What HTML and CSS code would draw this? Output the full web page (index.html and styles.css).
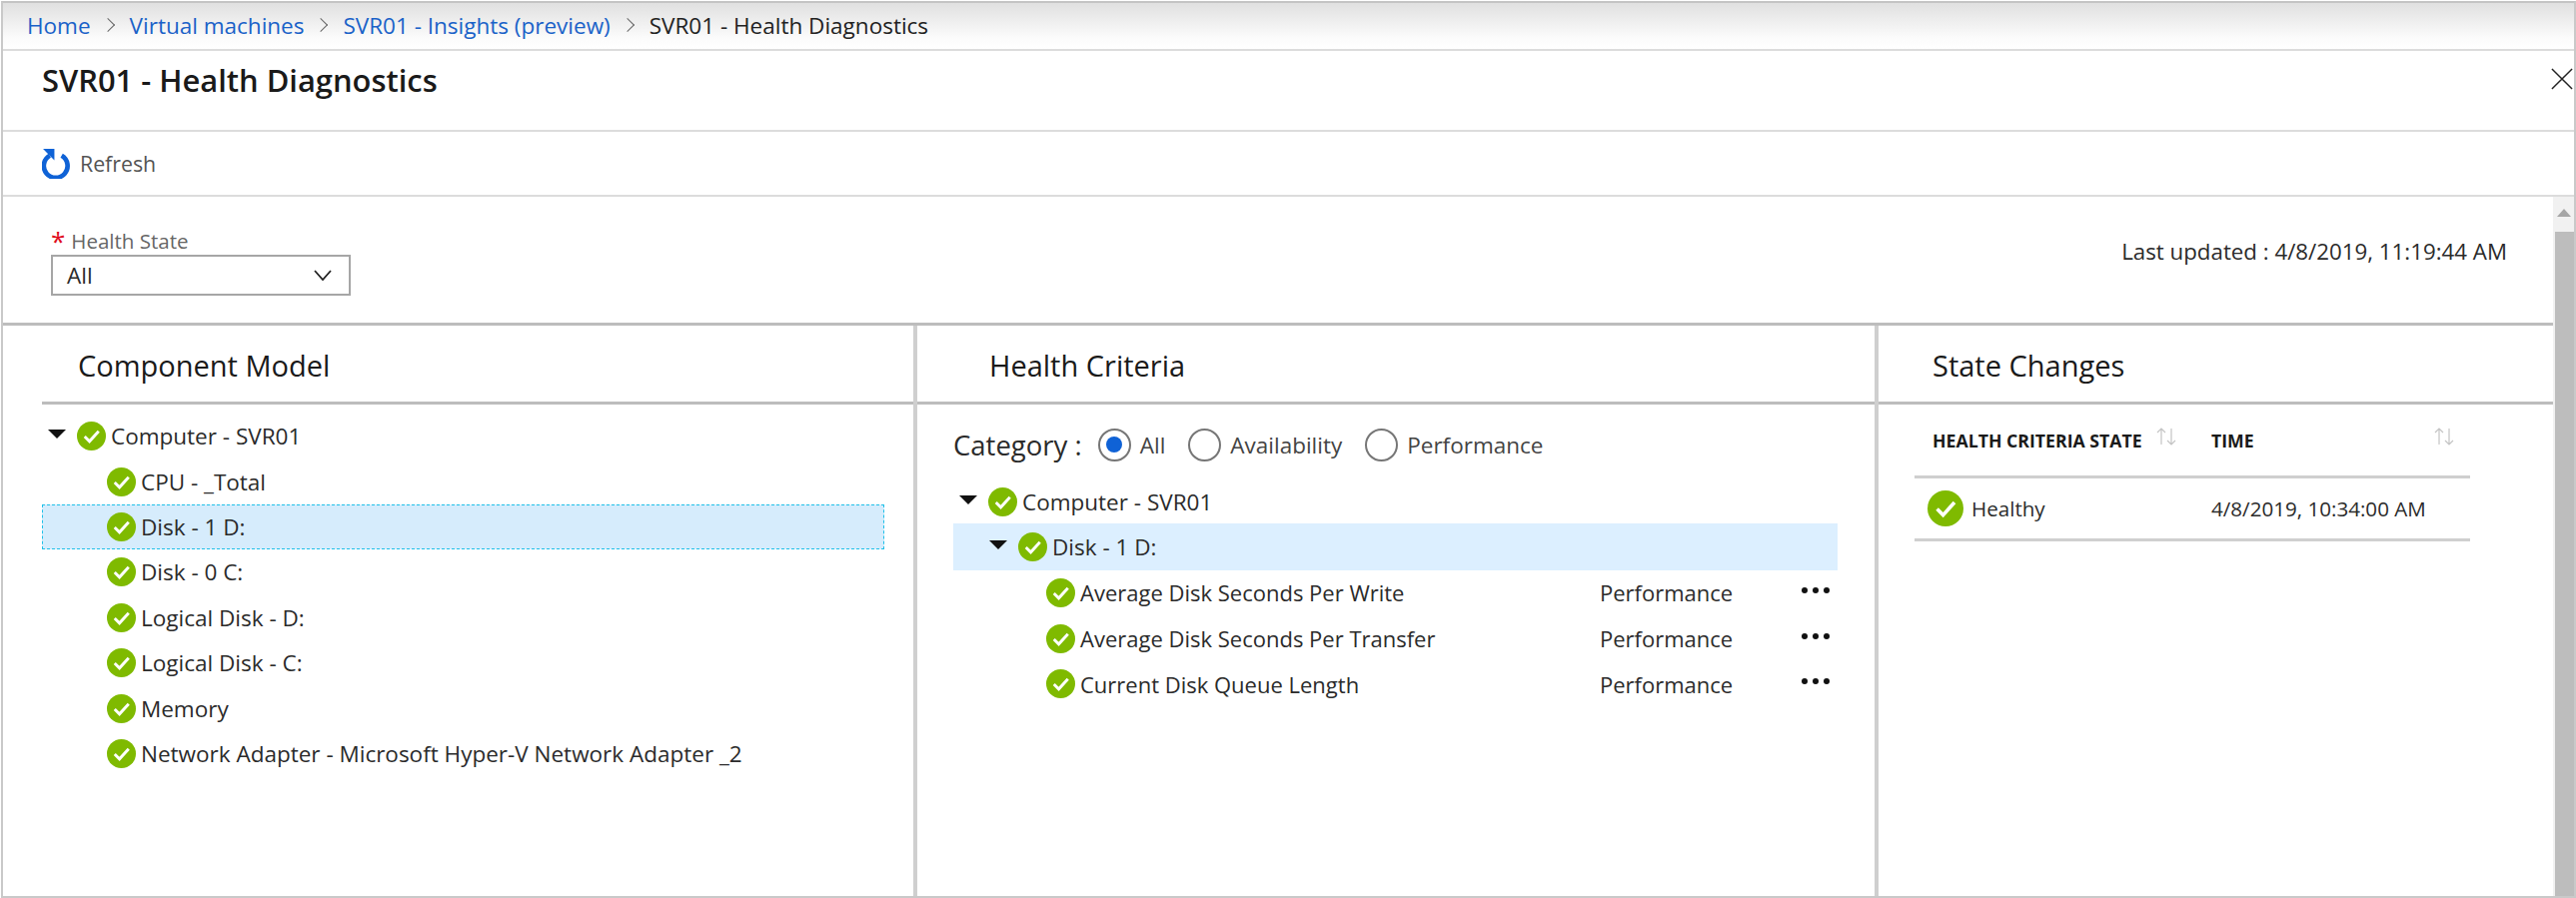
FILE: index.html
```html
<!DOCTYPE html>
<html>
<head>
  <title>SVR01 - Health Diagnostics</title>
  <link rel="stylesheet" href="styles.css">
</head>
<body>
  <svg class="defs" width="0" height="0">
    <symbol id="ok" viewBox="0 0 30 30">
      <circle cx="15" cy="15" r="15" fill="#7fba00"/>
      <path d="M8 15.5l5 5L22.5 10" fill="none" stroke="#fff" stroke-width="3"/>
    </symbol>
  </svg>
  <div class="window">
    <nav class="crumbs">
      <a>Home</a><span class="sep"></span>
      <a>Virtual machines</a><span class="sep"></span>
      <a>SVR01 - Insights (preview)</a><span class="sep"></span>
      <span>SVR01 - Health Diagnostics</span>
    </nav>
    <header class="title-bar">
      <h1>SVR01 - Health Diagnostics</h1>
      <svg class="close" viewBox="0 0 24 24"><path d="M1 1l22 22M23 1L1 23" stroke="#222" stroke-width="1.6" fill="none"/></svg>
    </header>
    <div class="toolbar">
      <svg class="refresh" viewBox="0 0 28 30"><path d="M19 7.5a11.5 11.5 0 1 1-11.5 0" fill="none" stroke="#0f62d6" stroke-width="4.5"/><path d="M1 1h11v11z" fill="#0f62d6"/></svg>
      <span>Refresh</span>
    </div>
    <div class="work">
      <div class="content">
        <div class="filter">
          <div>
            <div class="field-label"><span class="req">*</span>Health State</div>
            <div class="select">
              <span>All</span>
              <svg viewBox="0 0 18 11"><path d="M1 1l8 9 8-9" fill="none" stroke="#222" stroke-width="1.8"/></svg>
            </div>
          </div>
          <div class="updated">Last updated : 4/8/2019, 11:19:44 AM</div>
        </div>
        <div class="panels">
          <section class="panel panel-model">
            <h2>Component Model</h2>
            <div class="tree">
              <div class="row"><i class="arrow"></i><svg class="ok"><use href="#ok"/></svg>Computer - SVR01</div>
              <div class="row child"><svg class="ok"><use href="#ok"/></svg>CPU - _Total</div>
              <div class="row child selected"><svg class="ok"><use href="#ok"/></svg>Disk - 1 D:</div>
              <div class="row child"><svg class="ok"><use href="#ok"/></svg>Disk - 0 C:</div>
              <div class="row child"><svg class="ok"><use href="#ok"/></svg>Logical Disk - D:</div>
              <div class="row child"><svg class="ok"><use href="#ok"/></svg>Logical Disk - C:</div>
              <div class="row child"><svg class="ok"><use href="#ok"/></svg>Memory</div>
              <div class="row child"><svg class="ok"><use href="#ok"/></svg>Network Adapter - Microsoft Hyper-V Network Adapter _2</div>
            </div>
          </section>
          <section class="panel panel-criteria">
            <h2>Health Criteria</h2>
            <div class="category">
              <span class="category-label">Category :</span>
              <label class="radio"><i class="dot on"></i>All</label>
              <label class="radio"><i class="dot"></i>Availability</label>
              <label class="radio"><i class="dot"></i>Performance</label>
            </div>
            <div class="crit-tree">
              <div class="crit-row lvl0"><i class="arrow"></i><svg class="ok"><use href="#ok"/></svg>Computer - SVR01</div>
              <div class="crit-row lvl1"><i class="arrow"></i><svg class="ok"><use href="#ok"/></svg>Disk - 1 D:</div>
              <div class="crit-row lvl2"><svg class="ok"><use href="#ok"/></svg><span class="crit-name">Average Disk Seconds Per Write</span><span class="crit-kind">Performance</span><span class="more"><i></i><i></i><i></i></span></div>
              <div class="crit-row lvl2"><svg class="ok"><use href="#ok"/></svg><span class="crit-name">Average Disk Seconds Per Transfer</span><span class="crit-kind">Performance</span><span class="more"><i></i><i></i><i></i></span></div>
              <div class="crit-row lvl2"><svg class="ok"><use href="#ok"/></svg><span class="crit-name">Current Disk Queue Length</span><span class="crit-kind">Performance</span><span class="more"><i></i><i></i><i></i></span></div>
            </div>
          </section>
          <section class="panel panel-changes">
            <h2>State Changes</h2>
            <div class="table">
              <div class="thead">
                <div class="col-state">HEALTH CRITERIA STATE<svg class="sort" viewBox="0 0 20 20"><path d="M5 18V2M1 6l4-4 4 4M15 2v16M11 14l4 4 4-4" fill="none" stroke="#c4c4c4" stroke-width="1.2"/></svg></div>
                <div class="col-time">TIME<svg class="sort" viewBox="0 0 20 20"><path d="M5 18V2M1 6l4-4 4 4M15 2v16M11 14l4 4 4-4" fill="none" stroke="#c4c4c4" stroke-width="1.2"/></svg></div>
              </div>
              <div class="tbody">
                <div class="col-state"><svg class="ok-big"><use href="#ok"/></svg>Healthy</div>
                <div class="col-time">4/8/2019, 10:34:00 AM</div>
              </div>
            </div>
          </section>
        </div>
      </div>
      <div class="scrollbar">
        <div class="scroll-up"><i></i></div>
        <div class="scroll-thumb"></div>
      </div>
    </div>
  </div>
</body>
</html>
```

FILE: styles.css
```css
* {
  box-sizing: border-box;
}

html, body {
  margin: 0;
  padding: 0;
  height: 899px;
  overflow: hidden;
  background-color: #fff;
}

body {
  font-family: "Open Sans", "Liberation Sans", sans-serif;
  font-size: 22.5px;
  color: #2b2b2b;
}

.defs {
  display: block;
  height: 0;
}

.window {
  display: flex;
  flex-direction: column;
  width: 2577px;
  height: 898px;
  margin: 1px 0 0 1px;
  border: 2px solid #c9c9c9;
  border-top-color: #c4c4c4;
}

.crumbs {
  display: flex;
  align-items: center;
  height: 48px;
  padding: 0 0 2px 24px;
  background: linear-gradient(#e0e0e0, #fbfbfb 75%, #fff);
  border-bottom: 2px solid #dcdcdc;
  color: #222;
}

.crumbs a {
  color: #1a62c8;
}

.sep {
  width: 10px;
  height: 10px;
  margin: 0 17px 0 12px;
  border-top: 1.5px solid #666;
  border-right: 1.5px solid #666;
  transform: rotate(45deg);
}

.title-bar {
  display: flex;
  justify-content: space-between;
  height: 81px;
  padding: 8px 0 0 39px;
  border-bottom: 2px solid #dcdcdc;
}

.title-bar h1 {
  margin: 0;
  font-size: 30.9px;
  font-weight: 600;
  color: #1a1a1a;
}

.close {
  width: 22px;
  height: 22px;
  margin: 9px 1px 0 0;
}

.toolbar {
  display: flex;
  align-items: center;
  height: 65px;
  padding-left: 39px;
  border-bottom: 2px solid #dcdcdc;
  font-size: 21.3px;
  color: #555;
}

.refresh {
  width: 29px;
  height: 31px;
  margin-right: 9px;
}

.work {
  flex: 1;
  display: flex;
  min-height: 0;
}

.content {
  flex: 1;
  display: flex;
  flex-direction: column;
  min-width: 0;
}

.scrollbar {
  display: flex;
  flex-direction: column;
  width: 21px;
  background-color: #f1f1f1;
}

.scroll-up {
  display: flex;
  justify-content: center;
  height: 35px;
  padding-top: 12px;
}

.scroll-up i {
  width: 0;
  height: 0;
  border-left: 7px solid transparent;
  border-right: 7px solid transparent;
  border-bottom: 8px solid #a6a6a6;
}

.scroll-thumb {
  flex: 1;
  margin-left: 2px;
  background-color: #bdbdbd;
}

.filter {
  display: flex;
  justify-content: space-between;
  height: 129px;
  padding: 30px 46px 0 48px;
  border-bottom: 3px solid #bdbdbd;
}

.field-label {
  display: flex;
  align-items: center;
  height: 28px;
  font-size: 20.5px;
  color: #666;
}

.req {
  margin-right: 6px;
  font-size: 26px;
  line-height: 1;
  color: #e00b1c;
}

.select {
  display: flex;
  align-items: center;
  justify-content: space-between;
  width: 300px;
  height: 41px;
  padding: 0 17px 0 14px;
  border: 2px solid #a6a6a6;
}

.select svg {
  width: 18px;
  height: 11px;
}

.updated {
  margin-top: 9px;
  font-size: 22.3px;
}

.panels {
  flex: 1;
  display: flex;
  min-height: 0;
}

.panel {
  height: 100%;
  border-right: 4px solid #cfcfcf;
}

.panel:last-child {
  border-right: none;
}

.panel h2 {
  display: flex;
  align-items: center;
  height: 79px;
  margin: 0;
  padding-top: 2px;
  font-size: 29px;
  font-weight: 400;
  color: #1a1a1a;
  border-bottom: 3px solid #bdbdbd;
}

.panel-model {
  width: 915px;
}

.panel-model h2 {
  margin-left: 39px;
  padding-left: 36px;
}

.panel-criteria {
  width: 962px;
}

.panel-criteria h2 {
  padding-left: 72px;
}

.panel-changes {
  flex: 1;
}

.panel-changes h2 {
  padding-left: 54px;
}

.tree {
  padding: 9px 29px 0 39px;
}

.row {
  display: flex;
  align-items: center;
  height: 45.4px;
}

.child {
  padding-left: 65px;
}

.selected {
  background-color: #d6ecfc;
  outline: 1px dashed #20c0e8;
  outline-offset: -1px;
}

.arrow {
  flex: none;
  width: 0;
  height: 0;
  margin: 0 11px 4px 6px;
  border-left: 9px solid transparent;
  border-right: 9px solid transparent;
  border-top: 9px solid #111;
}

.ok {
  flex: none;
  width: 29px;
  height: 29px;
  margin-right: 5px;
}

.category {
  display: flex;
  align-items: center;
  height: 73px;
  padding: 7px 0 0 36px;
}

.category-label {
  margin-right: 16px;
  font-size: 27.5px;
}

.radio {
  display: flex;
  align-items: center;
  margin-right: 23px;
  color: #444;
}

.dot {
  display: flex;
  align-items: center;
  justify-content: center;
  width: 33px;
  height: 33px;
  margin-right: 9px;
  border: 2px solid #767676;
  border-radius: 50%;
}

.dot.on::after {
  content: "";
  width: 16px;
  height: 16px;
  border-radius: 50%;
  background-color: #0f62d6;
}

.crit-tree {
  padding: 0 37px 0 36px;
}

.crit-row {
  display: flex;
  align-items: center;
  height: 45.8px;
}

.lvl0 {
  height: 46px;
  padding-top: 3px;
}

.lvl1 {
  height: 46.5px;
  padding-left: 30px;
  background-color: #dcefff;
}

.lvl1 .arrow {
  margin-left: 6px;
  margin-right: 11px;
}

.lvl2 {
  padding-left: 93px;
  font-size: 22px;
}

.crit-name {
  width: 520px;
}

.crit-kind {
  width: 202px;
}

.more {
  display: flex;
  gap: 5px;
  margin-bottom: 5px;
}

.more i {
  width: 6px;
  height: 6px;
  border-radius: 50%;
  background-color: #111;
}

.table {
  width: 556px;
  margin: 0 0 0 36px;
}

.thead, .tbody {
  display: flex;
  align-items: center;
  border-bottom: 3px solid #cfcfcf;
}

.thead {
  height: 74px;
  font-size: 17.7px;
  font-weight: 700;
  color: #1a1a1a;
}

.tbody {
  height: 63px;
  font-size: 20.6px;
}

.col-state {
  display: flex;
  align-items: center;
  width: 297px;
  padding-left: 18px;
}

.tbody .col-state {
  padding-left: 13px;
}

.col-time {
  display: flex;
  align-items: center;
  flex: 1;
}

.sort {
  width: 20px;
  height: 20px;
  margin: 0 0 8px 14px;
}

.col-time .sort {
  margin-left: 180px;
}

.ok-big {
  width: 36px;
  height: 36px;
  margin-right: 8px;
}
```
